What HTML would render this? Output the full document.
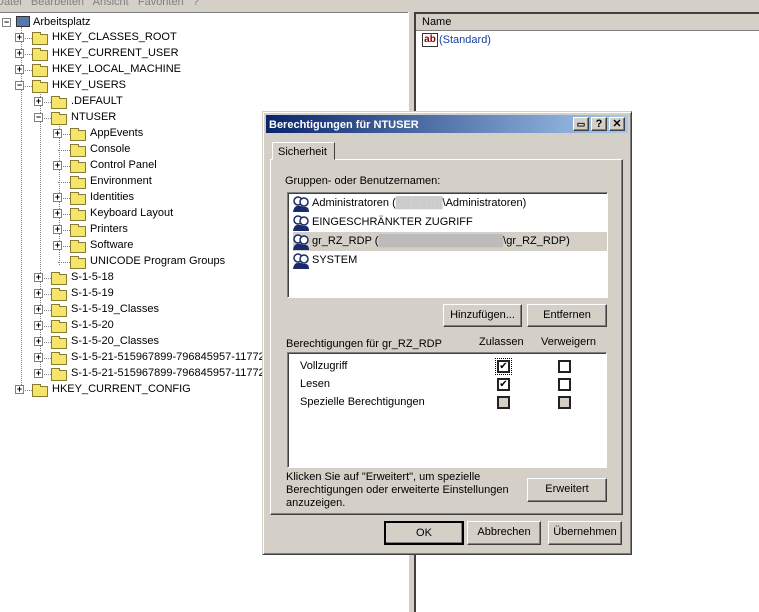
<!DOCTYPE html>
<html><head><meta charset="utf-8"><style>
*{margin:0;padding:0;box-sizing:border-box}
body{width:759px;height:612px;overflow:hidden;background:#d4d0c8;font-family:"Liberation Sans",sans-serif;font-size:11px;color:#000;position:relative}
.a{position:absolute;white-space:nowrap}
.tree{position:absolute;left:0;top:12px;width:408px;height:600px;background:#fff;border-top:1px solid #808080}
.right{position:absolute;left:414px;top:12px;width:345px;height:600px;background:#fff;border-left:2px solid #404040;border-top:2px solid #404040}
.hdr{position:absolute;left:0;top:0;width:345px;height:17px;background:#d4d0c8;border-bottom:1px solid #808080;padding:2px 6px}
.exp{position:absolute;width:9px;height:9px;border:1px solid #808080;background:#fff;font-size:9px;line-height:7px;text-align:center;font-weight:bold}
.fold{position:absolute;width:16px;height:11px;background:#f3e66a;border:1px solid #8a7a30}
.fold:before{content:"";position:absolute;left:-1px;top:-3px;width:7px;height:2px;background:#f3e66a;border:1px solid #8a7a30;border-bottom:none}
.dl{position:absolute;border-left:1px dotted #808080}
.dh{position:absolute;border-top:1px dotted #808080}
.btn{position:absolute;background:#d4d0c8;border:1px solid;border-color:#fff #404040 #404040 #fff;box-shadow:inset -1px -1px 0 #808080;text-align:center}
.cb{position:absolute;width:13px;height:13px;border:2px solid #222;background:#fff;font-size:10px;line-height:9px;text-align:center}
.ur{height:19px;line-height:19px;position:relative;padding-left:22px}
.ur svg{position:absolute;left:2px;top:2px}
</style></head><body>
<div class="a" style="left:-4px;top:-4px;color:#808080">Datei &nbsp; Bearbeiten &nbsp; Ansicht &nbsp; Favoriten &nbsp; ?</div>
<div class="tree">
<div class="dl" style="left:21px;top:14px;height:364px"></div>
<div class="dl" style="left:40px;top:78px;height:286px"></div>
<div class="dl" style="left:59px;top:110px;height:142px"></div>
<div class="exp" style="left:2px;top:5px">−</div>
<div class="a" style="left:16px;top:3px;width:14px;height:11px;background:#5577aa;border:1px solid #333"></div>
<div class="a" style="left:33px;top:3px">Arbeitsplatz</div>
</div>
<div id="t"></div>
<div class="right"><div class="hdr">Name</div>
<div class="a" style="left:6px;top:19px;width:16px;height:14px;border:1px solid #333;background:#fff;color:#8b0000;font-weight:bold;font-size:10px;line-height:11px;text-align:center">ab</div>
<div class="a" style="left:23px;top:20px;color:#1a3f9a">(Standard)</div>
</div>
<div class="a" style="left:408px;top:12px;width:6px;height:600px;background:#d4d0c8;border-left:1px solid #fff"></div>
<!-- dialog -->
<div class="a" style="left:262px;top:111px;width:370px;height:444px;background:#d4d0c8;border:1px solid;border-color:#d4d0c8 #404040 #404040 #d4d0c8;box-shadow:inset 1px 1px 0 #fff,inset -1px -1px 0 #808080">
<div class="a" style="left:3px;top:3px;width:362px;height:18px;background:linear-gradient(90deg,#0a246a,#a6caf0);color:#fff;font-weight:bold;padding:4px 3px 0">Berechtigungen für NTUSER</div>
<div class="btn" style="left:310px;top:5px;width:16px;height:14px;line-height:12px;font-size:9px;font-weight:bold">▭</div>
<div class="btn" style="left:328px;top:5px;width:16px;height:14px;line-height:12px;font-weight:bold">?</div>
<div class="btn" style="left:346px;top:5px;width:16px;height:14px;line-height:12px;font-weight:bold">✕</div>
<div class="a" style="left:7px;top:47px;width:353px;height:356px;border:1px solid;border-color:#fff #404040 #404040 #fff;box-shadow:inset -1px -1px 0 #808080"></div>
<div class="a" style="left:9px;top:30px;width:63px;height:18px;background:#d4d0c8;border:1px solid;border-color:#fff #404040 #d4d0c8 #fff;padding:3px 5px">Sicherheit</div>
<div class="a" style="left:22px;top:63px">Gruppen- oder Benutzernamen:</div>
<div class="a" style="left:24px;top:80px;width:321px;height:106px;background:#fff;border:1px solid;border-color:#808080 #fff #fff #808080;box-shadow:inset 1px 1px 0 #404040">
<div class="a" style="left:5px;top:39px;width:314px;height:19px;background:#d4d0c8"></div>
<div class="a" style="left:2px;top:1px">
<div class="ur">Administratoren (<span style="color:#ccc">██████</span>\Administratoren)</div>
<div class="ur">EINGESCHRÄNKTER ZUGRIFF</div>
<div class="ur">gr_RZ_RDP (<span style="color:#bbb">████████████████</span>\gr_RZ_RDP)</div>
<div class="ur">SYSTEM</div></div></div>
<div class="btn" style="left:180px;top:192px;width:79px;height:23px;line-height:20px">Hinzufügen...</div>
<div class="btn" style="left:264px;top:192px;width:80px;height:23px;line-height:20px">Entfernen</div>
<div class="a" style="left:23px;top:226px">Berechtigungen für gr_RZ_RDP</div>
<div class="a" style="left:216px;top:224px">Zulassen</div>
<div class="a" style="left:278px;top:224px">Verweigern</div>
<div class="a" style="left:24px;top:240px;width:320px;height:116px;background:#fff;border:1px solid;border-color:#808080 #fff #fff #808080;box-shadow:inset 1px 1px 0 #404040">
<div class="a" style="left:12px;top:7px">Vollzugriff</div>
<div class="a" style="left:12px;top:25px">Lesen</div>
<div class="a" style="left:12px;top:43px">Spezielle Berechtigungen</div>
<div class="cb" style="left:209px;top:7px;outline:1px dotted #000;outline-offset:1px">✔</div>
<div class="cb" style="left:270px;top:7px"></div>
<div class="cb" style="left:209px;top:25px">✔</div>
<div class="cb" style="left:270px;top:25px"></div>
<div class="cb" style="left:209px;top:43px;background:#d4d0c8"></div>
<div class="cb" style="left:270px;top:43px;background:#d4d0c8"></div>
</div>
<div class="a" style="left:23px;top:359px;line-height:13px">Klicken Sie auf "Erweitert", um spezielle<br>Berechtigungen oder erweiterte Einstellungen<br>anzuzeigen.</div>
<div class="btn" style="left:264px;top:366px;width:80px;height:24px;line-height:21px">Erweitert</div>
<div class="btn" style="left:121px;top:409px;width:80px;height:24px;line-height:20px;border:2px solid #000">OK</div>
<div class="btn" style="left:204px;top:409px;width:74px;height:24px;line-height:21px">Abbrechen</div>
<div class="btn" style="left:285px;top:409px;width:74px;height:24px;line-height:21px">Übernehmen</div>
</div>
<script>
var rows=[[1,"HKEY_CLASSES_ROOT","+"],[1,"HKEY_CURRENT_USER","+"],[1,"HKEY_LOCAL_MACHINE","+"],[1,"HKEY_USERS","−"],[2,".DEFAULT","+"],[2,"NTUSER","−"],[3,"AppEvents","+"],[3,"Console",""],[3,"Control Panel","+"],[3,"Environment",""],[3,"Identities","+"],[3,"Keyboard Layout","+"],[3,"Printers","+"],[3,"Software","+"],[3,"UNICODE Program Groups",""],[2,"S-1-5-18","+"],[2,"S-1-5-19","+"],[2,"S-1-5-19_Classes","+"],[2,"S-1-5-20","+"],[2,"S-1-5-20_Classes","+"],[2,"S-1-5-21-515967899-796845957-11772","+"],[2,"S-1-5-21-515967899-796845957-11772","+"],[1,"HKEY_CURRENT_CONFIG","+"]];
var h="";rows.forEach(function(r,i){var y=38+i*16;var ex=r[0]*19-2;
h+='<div class="dh" style="left:'+(ex+3)+'px;top:'+(y)+'px;width:12px"></div>';
if(r[2])h+='<div class="exp" style="left:'+(ex-2)+'px;top:'+(y-5)+'px">'+r[2]+'</div>';
h+='<div class="fold" style="left:'+(ex+15)+'px;top:'+(y-4)+'px"></div>';
h+='<div class="a" style="left:'+(ex+35)+'px;top:'+(y-7)+'px">'+r[1]+'</div>';});
document.getElementById("t").innerHTML=h;
var u='<svg width="18" height="16" viewBox="0 0 18 16"><circle cx="6" cy="5" r="4" fill="#fff" stroke="#1a2a6a" stroke-width="1.5"/><circle cx="12" cy="6" r="4" fill="#fff" stroke="#1a2a6a" stroke-width="1.5"/><path d="M1 16 Q2 9 7 10 Q12 9 13 16Z M7 16 Q8 10 12 11 Q17 10 17 16Z" fill="#1a2a6a"/></svg>';
document.querySelectorAll(".ur").forEach(function(e){e.insertAdjacentHTML("afterbegin",u)});
</script>
</body></html>
